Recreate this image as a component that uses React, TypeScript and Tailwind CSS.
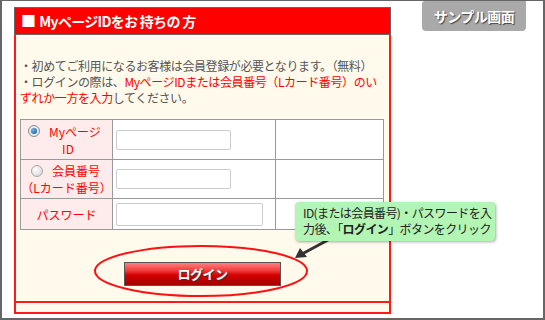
import React from 'react';

const jp = { fontFamily: '"Noto Sans CJK JP", "Noto Sans", sans-serif' };

function Radio({ checked }: { checked?: boolean }) {
  return checked ? (
    <span className="inline-flex w-[12px] h-[12px] rounded-full border border-[#8a8a8a] bg-[#e9e9e9] items-center justify-center shrink-0">
      <span className="w-[6px] h-[6px] rounded-full bg-[radial-gradient(circle_at_35%_35%,#6fb6e8,#0b4f8f)]" />
    </span>
  ) : (
    <span className="inline-block w-[12px] h-[12px] rounded-full border border-[#a8a8a8] bg-[radial-gradient(circle_at_35%_35%,#ffffff,#cfcfcf)] shrink-0" />
  );
}

function Field({ w, h }: { w: string; h: string }) {
  return <div className={`${w} ${h} bg-white border border-[#c9ccd2] rounded-[2px]`} />;
}

export default function App() {
  return (
    <div className="relative w-[545px] h-[320px] bg-white overflow-hidden" style={jp}>
      <div className="w-full h-full border-l-2 border-r-2 border-b-2 border-t border-[#666] box-border">
        <div className="ml-[12px] mt-[6px] w-[377px]">
          {/* header */}
          <div className="h-[28px] bg-[#ff0000] border border-[#666] flex items-center pl-[6px] text-white font-bold text-[14px] tracking-[-0.7px] whitespace-nowrap">
            <span className="text-[15px] mr-[4px]">■</span>
            <span>MyページIDをお 持ちの 方</span>
          </div>

          {/* body */}
          <div className="bg-[#fffaeb] border-x-2 border-b-2 border-[#ff1a1a]">
            <div className="border-b-2 border-[#ff1a1a] pt-[23px] pb-[15px] px-[4px]">
              <div className="text-[12px] leading-[16px] text-[#555] tracking-[-0.4px] whitespace-nowrap">
                <div>・初めてご利用になるお客様は会員登録が必要となります。（無料）</div>
                <div>
                  ・ログインの際は、<span className="text-[#ff0000]">MyページIDまたは会員番号（Lカード番号）のい</span>
                </div>
                <div>
                  <span className="text-[#ff0000]">ずれか一方を入力</span>してください。
                </div>
              </div>

              <table className="mt-[13px] w-[364px] border-collapse text-[12px] leading-[17px] text-[#ff0000]">
                <tbody>
                  <tr className="h-[40px]">
                    <td className="w-[92px] border border-[#999] bg-[#fdeceb] p-0">
                      <div className="flex flex-col items-center leading-[17px]">
                        <div className="flex items-center gap-[9px] -ml-[4px] h-[17px]">
                          <Radio checked />
                          <span>Myページ</span>
                        </div>
                        <span className="ml-[3px] h-[17px]">ID</span>
                      </div>
                    </td>
                    <td className="w-[163px] border border-[#999] bg-white pl-[3px]">
                      <Field w="w-[115px]" h="h-[20px]" />
                    </td>
                    <td className="border border-[#999] bg-white" />
                  </tr>
                  <tr className="h-[39px]">
                    <td className="border border-[#999] bg-[#fdeceb] p-0">
                      <div className="flex flex-col items-center leading-[17px]">
                        <div className="flex items-center gap-[9px] -ml-[2px] h-[17px]">
                          <Radio />
                          <span>会員番号</span>
                        </div>
                        <span className="h-[17px]">（Lカード番号）</span>
                      </div>
                    </td>
                    <td className="border border-[#999] bg-white pl-[3px]">
                      <Field w="w-[115px]" h="h-[20px]" />
                    </td>
                    <td className="border border-[#999] bg-white" />
                  </tr>
                  <tr className="h-[31px]">
                    <td className="border border-[#999] bg-[#fdeceb] text-center p-0">パスワード</td>
                    <td className="border border-[#999] bg-white pl-[3px]">
                      <Field w="w-[147px]" h="h-[23px]" />
                    </td>
                    <td className="border border-[#999] bg-white" />
                  </tr>
                </tbody>
              </table>

              <div className="mt-[32px] flex justify-center">
                <button className="w-[157px] h-[24px] border border-[#555] bg-[linear-gradient(to_bottom,#ff8080_0%,#f23a3a_35%,#d40000_55%,#a60000_100%)] text-white font-bold text-[13px] [text-shadow:1px_1px_1px_#333] tracking-[-0.5px]">
                  ログイン
                </button>
              </div>
            </div>
            <div className="h-[9px]" />
          </div>
        </div>
      </div>

      {/* sample badge */}
      <div className="absolute left-[422px] top-[1px] w-[104px] h-[30px] bg-[#a9a9a9] rounded-b-[4px] rounded-tl-[3px] flex items-center justify-center text-white font-bold text-[14px] tracking-[-0.5px] [text-shadow:1px_1px_1px_#444]">
        サンプル画面
      </div>

      {/* annotation ring + arrow */}
      <svg className="absolute inset-0 pointer-events-none" width="545" height="320">
        <ellipse cx="201" cy="271" rx="106" ry="25" fill="none" stroke="#ff1010" strokeWidth="2" />
        <line x1="328" y1="240" x2="302" y2="254" stroke="#333" strokeWidth="3" />
        <polygon points="295,258 300,248 307,257" fill="#333" />
      </svg>

      {/* tooltip */}
      <div className="absolute left-[295px] top-[202px] w-[200px] h-[39px] bg-[#b2f5b4] rounded-[4px] shadow-[1px_1px_3px_rgba(0,0,0,0.35)] pl-[8px] pt-[3px] text-[12px] leading-[16px] text-[#222] tracking-[-0.6px] whitespace-nowrap">
        <div>ID(または会員番号)・パスワードを入</div>
        <div>
          力後、「<span className="font-bold">ログイン</span>」ボタンをクリック
        </div>
      </div>
    </div>
  );
}
